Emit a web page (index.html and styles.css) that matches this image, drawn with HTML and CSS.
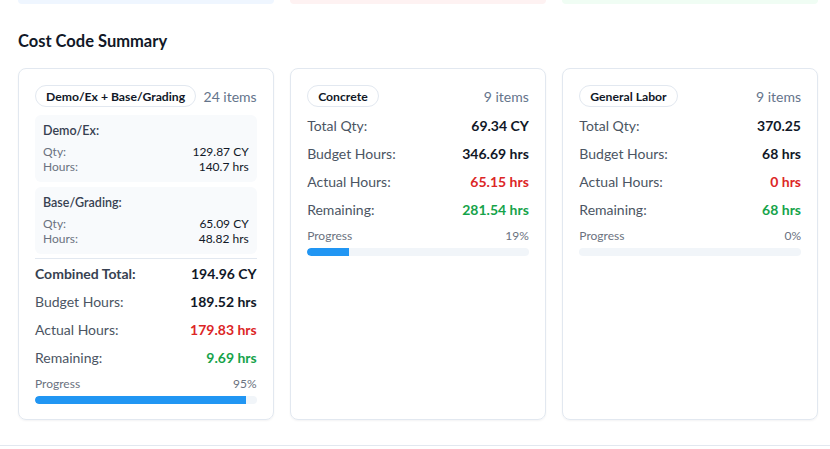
FILE: index.html
```html
<!DOCTYPE html>
<html>
<head>
<meta charset="utf-8">
<link rel="stylesheet" href="styles.css">
</head>
<body>
<div class="page">
  <div class="stats">
    <div class="stat stat-blue"></div>
    <div class="stat stat-red"></div>
    <div class="stat stat-green"></div>
  </div>
  <h2 class="title">Cost Code Summary</h2>
  <div class="cards">
    <div class="card">
      <div class="card-head">
        <span class="pill">Demo/Ex + Base/Grading</span>
        <span class="count">24 items</span>
      </div>
      <div class="subs">
        <div class="sub">
          <div class="sub-title">Demo/Ex:</div>
          <div class="sub-row"><span class="sub-label">Qty:</span><span>129.87 CY</span></div>
          <div class="sub-row"><span class="sub-label">Hours:</span><span>140.7 hrs</span></div>
        </div>
        <div class="sub">
          <div class="sub-title">Base/Grading:</div>
          <div class="sub-row"><span class="sub-label">Qty:</span><span>65.09 CY</span></div>
          <div class="sub-row"><span class="sub-label">Hours:</span><span>48.82 hrs</span></div>
        </div>
      </div>
      <div class="rows divided">
        <div class="row"><span class="label strong">Combined Total:</span><span class="value">194.96 CY</span></div>
        <div class="row"><span class="label">Budget Hours:</span><span class="value">189.52 hrs</span></div>
        <div class="row"><span class="label">Actual Hours:</span><span class="value red">179.83 hrs</span></div>
        <div class="row"><span class="label">Remaining:</span><span class="value green">9.69 hrs</span></div>
      </div>
      <div class="progress">
        <div class="progress-head"><span>Progress</span><span>95%</span></div>
        <div class="bar"><div class="fill" style="width:95%"></div></div>
      </div>
    </div>

    <div class="card">
      <div class="card-head">
        <span class="pill">Concrete</span>
        <span class="count">9 items</span>
      </div>
      <div class="rows">
        <div class="row"><span class="label">Total Qty:</span><span class="value">69.34 CY</span></div>
        <div class="row"><span class="label">Budget Hours:</span><span class="value">346.69 hrs</span></div>
        <div class="row"><span class="label">Actual Hours:</span><span class="value red">65.15 hrs</span></div>
        <div class="row"><span class="label">Remaining:</span><span class="value green">281.54 hrs</span></div>
      </div>
      <div class="progress">
        <div class="progress-head"><span>Progress</span><span>19%</span></div>
        <div class="bar"><div class="fill" style="width:19%"></div></div>
      </div>
    </div>

    <div class="card">
      <div class="card-head">
        <span class="pill">General Labor</span>
        <span class="count">9 items</span>
      </div>
      <div class="rows">
        <div class="row"><span class="label">Total Qty:</span><span class="value">370.25</span></div>
        <div class="row"><span class="label">Budget Hours:</span><span class="value">68 hrs</span></div>
        <div class="row"><span class="label">Actual Hours:</span><span class="value red">0 hrs</span></div>
        <div class="row"><span class="label">Remaining:</span><span class="value green">68 hrs</span></div>
      </div>
      <div class="progress">
        <div class="progress-head"><span>Progress</span><span>0%</span></div>
        <div class="bar"><div class="fill" style="width:0%"></div></div>
      </div>
    </div>
  </div>
</div>
</body>
</html>
```

FILE: styles.css
```css
* { box-sizing: border-box; }
html, body { margin: 0; padding: 0; background: #ffffff; }
body {
  font-family: "Lato", "Open Sans", sans-serif;
  color: #111827;
  overflow: hidden;
}
.page {
  width: 830px;
  height: 446px;
  border-bottom: 1px solid #e2e8f0;
  padding: 0 12px 0 18px;
}
.stats {
  display: grid;
  grid-template-columns: repeat(3, 1fr);
  gap: 16.5px;
}
.stat {
  height: 4px;
  border-radius: 0 0 8px 8px;
}
.stat-blue { background: #eff6ff; }
.stat-red { background: #fef2f2; }
.stat-green { background: #f0fdf4; }

.title {
  margin: 0;
  margin-top: 25px;
  height: 24px;
  line-height: 24px;
  font-size: 16.5px;
  font-weight: 700;
  color: #111827;
}
.cards {
  margin-top: 15px;
  display: grid;
  grid-template-columns: repeat(3, 1fr);
  gap: 16.5px;
  align-items: stretch;
}
.card {
  border: 1px solid #e2e8f0;
  border-radius: 8px;
  padding: 16px;
  height: 352px;
  box-shadow: 0 1px 2px rgba(15, 23, 42, 0.05);
}
.card-head {
  display: flex;
  justify-content: space-between;
  align-items: center;
  height: 22px;
}
.pill {
  display: inline-flex;
  align-items: center;
  height: 22px;
  padding: 0 10px;
  border: 1px solid #e2e8f0;
  border-radius: 999px;
  font-size: 12.2px;
  font-weight: 700;
  color: #111827;
}
.count {
  font-size: 14px;
  color: #64748b;
}
.subs {
  margin-top: 8px;
  display: flex;
  flex-direction: column;
  gap: 5px;
}
.sub {
  background: #f8fafc;
  border-radius: 6px;
  padding: 8px;
  height: 67px;
}
.sub-title {
  font-size: 12.5px;
  font-weight: 600;
  color: #374151;
  line-height: 16px;
  margin-bottom: 5px;
}
.sub-row {
  display: flex;
  justify-content: space-between;
  font-size: 12px;
  line-height: 15px;
  color: #111827;
}
.sub-label { color: #6b7280; }

.rows {
  margin-top: 8px;
  display: flex;
  flex-direction: column;
  gap: 8px;
}
.rows.divided {
  margin-top: 4px;
  border-top: 1px solid #e2e8f0;
  padding-top: 4px;
}
.row {
  display: flex;
  justify-content: space-between;
  align-items: center;
  height: 20px;
  font-size: 14px;
}
.label { color: #4b5563; }
.label.strong { font-weight: 700; color: #374151; }
.value { font-weight: 700; color: #111827; }
.value.red { color: #dc2626; }
.value.green { color: #16a34a; }

.progress { margin-top: 9px; }
.progress-head {
  display: flex;
  justify-content: space-between;
  font-size: 12px;
  line-height: 16px;
  color: #6b7280;
  margin-bottom: 4px;
}
.bar {
  height: 8px;
  background: #f1f5f9;
  border-radius: 999px;
  overflow: hidden;
}
.fill {
  height: 100%;
  background: #2196f3;
  border-radius: 999px 0 0 999px;
}
```
